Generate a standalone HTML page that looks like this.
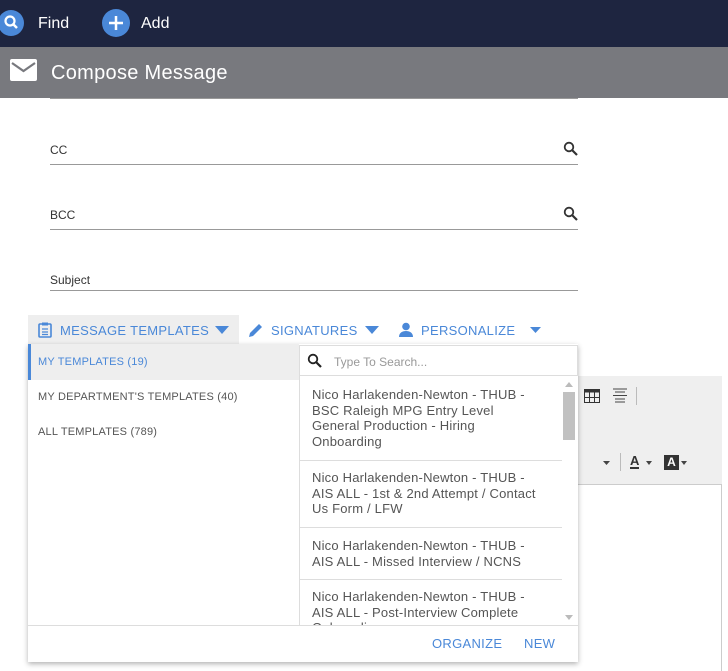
<!DOCTYPE html>
<html><head><style>
*{box-sizing:border-box;margin:0;padding:0}
body{width:728px;height:671px;overflow:hidden;background:#fff;font-family:"Liberation Sans",sans-serif;position:relative}
.a{position:absolute}
.top{left:0;top:0;width:728px;height:47px;background:#1e2540}
.bar{left:0;top:47px;width:728px;height:51px;background:#78797e}
.line{left:50px;width:528px;height:1px;background:#999}
.lbl{left:50px;font-size:12px;color:#333}
.tb{font-size:13px;color:#4a88d8;letter-spacing:.3px}
.it{left:312px;width:250px;font-size:13px;color:#555;line-height:15.5px;white-space:nowrap;letter-spacing:.2px}
.sep{left:300px;width:262px;height:1px;background:#ddd}
</style></head><body>
<div class="a top"></div>
<svg class="a" style="left:0;top:9px" width="26" height="28"><circle cx="11" cy="14" r="13" fill="#4a88d8"/><circle cx="10" cy="12" r="4.5" stroke="#fff" stroke-width="2.2" fill="none"/><line x1="13" y1="15" x2="17" y2="19" stroke="#fff" stroke-width="2.5"/></svg>
<div class="a" style="left:38px;top:15px;color:#fff;font-size:16px">Find</div>
<svg class="a" style="left:102px;top:9px" width="28" height="28"><circle cx="14" cy="14" r="14" fill="#4a88d8"/><path d="M14 7v14M7 14h14" stroke="#fff" stroke-width="2.5"/></svg>
<div class="a" style="left:141px;top:15px;color:#fff;font-size:16px">Add</div>
<div class="a bar"></div>
<svg class="a" style="left:10px;top:59px" width="28" height="23"><rect x="0" y="0" width="27" height="22" rx="2" fill="#fff"/><path d="M2 4l11.5 8L25 4" stroke="#78797e" stroke-width="2.2" fill="none"/></svg>
<div class="a" style="left:51px;top:62px;color:#fff;font-size:20px;letter-spacing:.3px">Compose Message</div>
<div class="a line" style="top:98px"></div>
<div class="a lbl" style="top:143px">CC</div>
<div class="a line" style="top:164px"></div>
<div class="a lbl" style="top:208px">BCC</div>
<div class="a line" style="top:229px"></div>
<div class="a lbl" style="top:273px">Subject</div>
<div class="a line" style="top:290px"></div>
<svg class="a" style="left:563px;top:141px" width="16" height="16"><circle cx="6" cy="6" r="4.3" stroke="#333" stroke-width="1.8" fill="none"/><line x1="9" y1="9" x2="14" y2="14" stroke="#333" stroke-width="2.2"/></svg>
<svg class="a" style="left:563px;top:206px" width="16" height="16"><circle cx="6" cy="6" r="4.3" stroke="#333" stroke-width="1.8" fill="none"/><line x1="9" y1="9" x2="14" y2="14" stroke="#333" stroke-width="2.2"/></svg>
<div class="a" style="left:28px;top:315px;width:211px;height:30px;background:#eee"></div>
<svg class="a" style="left:38px;top:322px" width="14" height="16"><rect x="1" y="2" width="12" height="13" rx="1" fill="none" stroke="#4a88d8" stroke-width="1.6"/><rect x="4" y="0.5" width="6" height="3" fill="#4a88d8"/><path d="M4 7h6M4 10h6M4 12.5h6" stroke="#4a88d8" stroke-width="1.2"/></svg>
<div class="a tb" style="left:60px;top:323px">MESSAGE TEMPLATES</div>
<svg class="a" style="left:215px;top:326px" width="14" height="8"><path d="M0 0h14L7 8z" fill="#4a88d8"/></svg>
<svg class="a" style="left:248px;top:322px" width="16" height="16"><path d="M1 15l1-4 9-9 3 3-9 9z" fill="#4a88d8"/></svg>
<div class="a tb" style="left:271px;top:323px">SIGNATURES</div>
<svg class="a" style="left:365px;top:326px" width="14" height="8"><path d="M0 0h14L7 8z" fill="#4a88d8"/></svg>
<svg class="a" style="left:398px;top:322px" width="16" height="16"><circle cx="8" cy="4.5" r="3.8" fill="#4a88d8"/><path d="M1 15c0-4 3-6 7-6s7 2 7 6z" fill="#4a88d8"/></svg>
<div class="a tb" style="left:421px;top:323px">PERSONALIZE</div>
<svg class="a" style="left:530px;top:327px" width="11" height="6"><path d="M0 0h11L5.5 6z" fill="#4a88d8"/></svg>
<div class="a" style="left:578px;top:376px;width:144px;height:109px;background:#efefef;border-bottom:1px solid #ccc"></div>
<div class="a" style="left:721px;top:485px;width:1px;height:186px;background:#ccc"></div>
<svg class="a" style="left:584px;top:389px" width="16" height="14"><rect x="0.5" y="0.5" width="15" height="13" fill="none" stroke="#333"/><rect x="0.5" y="0.5" width="15" height="3" fill="#333"/><path d="M5.5 3v11M10.5 3v11M0 8.5h16" stroke="#333"/></svg>
<svg class="a" style="left:613px;top:388px" width="14" height="16"><path d="M0 1h14M2 4h10M0 7.5h14M2 11h10M2 14h10" stroke="#444" stroke-width="1"/></svg>
<div class="a" style="left:636px;top:387px;width:1px;height:18px;background:#bbb"></div>
<svg class="a" style="left:603px;top:461px" width="8" height="5"><path d="M0 0h7L3.5 4z" fill="#444"/></svg>
<div class="a" style="left:620px;top:453px;width:1px;height:18px;background:#bbb"></div>
<div class="a" style="left:630px;top:454px;font-size:13px;font-weight:bold;color:#333;border-bottom:2px solid #333;line-height:13px">A</div>
<svg class="a" style="left:646px;top:461px" width="6" height="4"><path d="M0 0h6L3 4z" fill="#444"/></svg>
<div class="a" style="left:664px;top:455px;width:15px;height:15px;background:#333;color:#fff;font-size:12px;font-weight:bold;text-align:center;line-height:15px">A</div>
<svg class="a" style="left:681px;top:461px" width="6" height="4"><path d="M0 0h6L3 4z" fill="#444"/></svg>
<div class="a" style="left:28px;top:344px;width:550px;height:318px;background:#fff;box-shadow:0 2px 5px rgba(0,0,0,.3)"></div>
<div class="a" style="left:28px;top:344px;width:271px;height:36px;background:#eee;border-left:3px solid #4a88d8"></div>
<div class="a" style="left:38px;top:356px;font-size:11px;color:#4a88d8;letter-spacing:.2px">MY TEMPLATES (19)</div>
<div class="a" style="left:38px;top:391px;font-size:11px;color:#555;letter-spacing:.2px">MY DEPARTMENT'S TEMPLATES (40)</div>
<div class="a" style="left:38px;top:426px;font-size:11px;color:#555;letter-spacing:.2px">ALL TEMPLATES (789)</div>
<div class="a" style="left:299px;top:345px;width:279px;height:31px;border:1px solid #ddd;background:#fff"></div>
<svg class="a" style="left:307px;top:353px" width="16" height="16"><circle cx="6" cy="6" r="4.3" stroke="#222" stroke-width="1.8" fill="none"/><line x1="9" y1="9" x2="14" y2="14" stroke="#222" stroke-width="2.2"/></svg>
<div class="a" style="left:334px;top:355px;font-size:12px;color:#999">Type To Search...</div>
<div class="a" style="left:299px;top:376px;width:1px;height:250px;background:#ddd"></div>
<div class="a" style="left:563px;top:392px;width:12px;height:48px;background:#c1c1c1"></div>
<svg class="a" style="left:565px;top:382px" width="8" height="5"><path d="M0 5h8L4 0z" fill="#bbb"/></svg>
<svg class="a" style="left:565px;top:615px" width="8" height="5"><path d="M0 0h8L4 5z" fill="#bbb"/></svg>
<div class="a it" style="top:387px">Nico Harlakenden-Newton - THUB -<br>BSC Raleigh MPG Entry Level<br>General Production - Hiring<br>Onboarding</div>
<div class="a sep" style="top:460px"></div>
<div class="a it" style="top:470px">Nico Harlakenden-Newton - THUB -<br>AIS ALL - 1st &amp; 2nd Attempt / Contact<br>Us Form / LFW</div>
<div class="a sep" style="top:527px"></div>
<div class="a it" style="top:538px">Nico Harlakenden-Newton - THUB -<br>AIS ALL - Missed Interview / NCNS</div>
<div class="a sep" style="top:579px"></div>
<div class="a" style="left:300px;top:580px;width:262px;height:45px;overflow:hidden"><div class="a it" style="left:12px;top:9px">Nico Harlakenden-Newton - THUB -<br>AIS ALL - Post-Interview Complete<br>Onboarding</div></div>
<div class="a" style="left:28px;top:625px;width:550px;height:1px;background:#ddd"></div>
<div class="a" style="left:432px;top:636px;font-size:13px;color:#4a88d8;letter-spacing:.3px">ORGANIZE</div>
<div class="a" style="left:524px;top:636px;font-size:13px;color:#4a88d8;letter-spacing:.3px">NEW</div>
</body></html>
